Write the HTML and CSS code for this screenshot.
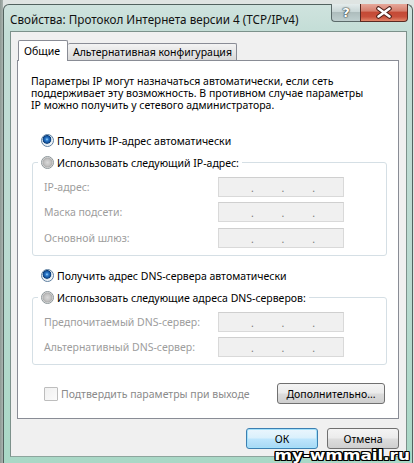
FILE: index.html
```html
<!DOCTYPE html>
<html lang="ru">
<head>
<meta charset="utf-8">
<title>Свойства: Протокол Интернета версии 4 (TCP/IPv4)</title>
<link rel="stylesheet" href="styles.css">
</head>
<body>
<div class="window">
  <div class="titlebar">
    <span class="title">Свойства: Протокол Интернета версии 4 (TCP/IPv4)</span>
    <div class="caption-buttons">
      <div class="cap cap-help"><span>?</span></div>
      <div class="cap cap-close">
        <svg width="18" height="13" viewBox="0 0 18 13">
          <path d="M3.5 2.5 L14.5 10.5 M14.5 2.5 L3.5 10.5" stroke="#4a1d16" stroke-width="4.6" stroke-linecap="round"/>
          <path d="M3.5 2.5 L14.5 10.5 M14.5 2.5 L3.5 10.5" stroke="#ffffff" stroke-width="2.6" stroke-linecap="round"/>
        </svg>
      </div>
    </div>
  </div>

  <div class="client">
    <div class="tabs">
      <div class="tab active">Общие</div>
      <div class="tab">Альтернативная конфигурация</div>
    </div>

    <div class="panel">
      <p class="intro">Параметры IP могут назначаться автоматически, если сеть
поддерживает эту возможность. В противном случае параметры
IP можно получить у сетевого администратора.</p>

      <div class="option first">
        <span class="radio on"></span><span>Получить IP-адрес автоматически</span>
      </div>

      <fieldset class="group">
        <legend class="option"><span class="radio"></span><span>Использовать следующий IP-адрес:</span></legend>
        <div class="fields">
          <span class="label">IP-адрес:</span>
          <div class="ip"><i></i><b>.</b><i></i><b>.</b><i></i><b>.</b><i></i></div>
          <span class="label">Маска подсети:</span>
          <div class="ip"><i></i><b>.</b><i></i><b>.</b><i></i><b>.</b><i></i></div>
          <span class="label">Основной шлюз:</span>
          <div class="ip"><i></i><b>.</b><i></i><b>.</b><i></i><b>.</b><i></i></div>
        </div>
      </fieldset>

      <div class="option dns">
        <span class="radio on"></span><span>Получить адрес DNS-сервера автоматически</span>
      </div>

      <fieldset class="group">
        <legend class="option"><span class="radio"></span><span>Использовать следующие адреса DNS-серверов:</span></legend>
        <div class="fields">
          <span class="label">Предпочитаемый DNS-сервер:</span>
          <div class="ip"><i></i><b>.</b><i></i><b>.</b><i></i><b>.</b><i></i></div>
          <span class="label">Альтернативный DNS-сервер:</span>
          <div class="ip"><i></i><b>.</b><i></i><b>.</b><i></i><b>.</b><i></i></div>
        </div>
      </fieldset>

      <div class="bottom-row">
        <label class="check"><span class="box"></span><span>Подтвердить параметры при выходе</span></label>
        <button class="btn advanced">Дополнительно...</button>
      </div>
    </div>

    <div class="actions">
      <button class="btn default">ОК</button>
      <button class="btn">Отмена</button>
    </div>
  </div>
</div>
<div class="watermark">my-wmmail.ru</div>
</body>
</html>
```

FILE: styles.css
```css
html, body {
  margin: 0;
  height: 100%;
}

body {
  position: relative;
  overflow: hidden;
  background: linear-gradient(90deg, #8e9994 0, #aab4b0 3px, #dfe4e2 3px);
  font-family: "Noto Sans", "Open Sans", sans-serif;
  font-size: 10.5px;
  color: #000;
}

/* Aero window frame */
.window {
  margin: 4px 1px 0 3px;
  height: 459px;
  box-sizing: border-box;
  padding: 0 5px 0 6px;
  border: 1px solid #52625f;
  border-bottom: none;
  border-radius: 6px 6px 0 0;
  background: linear-gradient(180deg, #cfe3de 0, #c3ddd6 28px, #b9dad0 60%, #a9d8c6 100%);
  display: flex;
  flex-direction: column;
}

.titlebar {
  height: 26px;
  display: flex;
  justify-content: space-between;
  align-items: center;
}

.title {
  font-size: 11.7px;
  color: #111;
  margin-top: 1px;
}

.caption-buttons {
  align-self: flex-start;
  display: flex;
  margin-top: -1px;
  margin-right: -1px;
}

.cap {
  height: 18px;
  box-sizing: border-box;
  border: 1px solid #5b6a6a;
  border-top: none;
  display: flex;
  align-items: center;
  justify-content: center;
}

.cap-help {
  width: 29px;
  border-right: none;
  border-radius: 0 0 0 4px;
  background: linear-gradient(180deg, #e4ecec 0, #c9d6d6 45%, #aebdbd 50%, #bfcfcf 100%);
}

.cap-help span {
  font-family: "DejaVu Sans", sans-serif;
  font-weight: bold;
  font-size: 13px;
  color: #fff;
  text-shadow: 0 0 1px #2f3a3a, 0 0 1px #2f3a3a, 0 0 2px #2f3a3a;
}

.cap-close {
  width: 48px;
  border-color: #5a2a22;
  border-radius: 0 0 4px 0;
  background: linear-gradient(180deg, #e6a89a 0, #d6806f 40%, #c44a36 50%, #c8503c 75%, #e2866a 100%);
}

/* dialog client area */
.client {
  flex: 1;
  border: 1px solid #7c918b;
  border-bottom-color: #8da59d;
  background: #f0f0f0;
  padding: 8px 7px 0 6px;
  margin-bottom: 6px;
}

.tabs {
  display: flex;
  align-items: flex-end;
  height: 20px;
  padding-left: 1px;
}

.tab {
  box-sizing: border-box;
  height: 17px;
  padding: 0 4px 0 5px;
  border: 1px solid #898c95;
  border-bottom: none;
  border-left: none;
  border-radius: 2px 2px 0 0;
  background: linear-gradient(180deg, #f3f3f3 0, #e6e6e6 50%, #d9d9d9 100%);
  display: flex;
  align-items: center;
  white-space: nowrap;
}

.tab.active {
  position: relative;
  z-index: 1;
  height: 21px;
  margin-bottom: -1px;
  padding: 0 7px 0 5px;
  border-left: 1px solid #898c95;
  background: #fff;
}

.panel {
  border: 1px solid #898c95;
  background: #fff;
  padding: 14px 11px 14px 13px;
}

.intro {
  margin: 0;
  line-height: 12.2px;
  white-space: pre-line;
}

.option {
  display: flex;
  align-items: center;
  gap: 3px;
  height: 14px;
  white-space: nowrap;
}

.option.first {
  margin: 22px 0 0 10px;
}

.option.dns {
  margin: 13px 0 0 10px;
}

.radio {
  width: 13px;
  height: 13px;
  box-sizing: border-box;
  border-radius: 50%;
  border: 1px solid #8c9699;
  background: radial-gradient(circle at 50% 50%, #d9d9d9 0, #c4c4c4 3px, #b1b1b1 4.5px, #e8e8e8 5.5px);
  flex: none;
}

.radio.on {
  border-color: #5e7fa0;
  background: radial-gradient(circle at 45% 40%, #a8dcff 0, #2f7fd0 1.4px, #114f98 3.4px, #0b3a73 4px, #c9d9e6 4.6px, #f1f4f6 5.5px);
}

.group {
  margin: 8px 0 0 1px;
  padding: 7px 0 7px 11px;
  border: 1px solid #d5dfe5;
  border-radius: 3px;
}

.group legend {
  margin-left: -6px;
  padding: 0 3px;
}

.fields {
  display: grid;
  grid-template-columns: 174px 126px;
  row-gap: 5.5px;
  align-items: center;
}

.label {
  color: #9d9d9d;
}

.ip {
  height: 20px;
  box-sizing: border-box;
  border: 1px solid #d9d9d9;
  border-top-color: #cfcfcf;
  background: #f0f0f0;
  padding-left: 4px;
  display: grid;
  grid-template-columns: 1fr auto 1fr auto 1fr auto 1fr;
  align-items: center;
  color: #7d7d7d;
}

.ip b {
  font-weight: normal;
  margin-top: 2px;
}

.bottom-row {
  margin: 18px 2px 0 13px;
  display: flex;
  justify-content: space-between;
  align-items: center;
}

.check {
  display: flex;
  align-items: center;
  gap: 3px;
  color: #8a8a8a;
}

.box {
  width: 14px;
  height: 14px;
  box-sizing: border-box;
  border: 1px solid #bdbdbd;
  border-radius: 1px;
  background: linear-gradient(135deg, #f0f0f0, #fbfbfb);
}

.btn {
  font: inherit;
  color: #000;
  height: 21px;
  box-sizing: border-box;
  border: 1px solid #707070;
  border-radius: 3px;
  background: linear-gradient(180deg, #f4f4f4 0, #ebebeb 49%, #dddddd 51%, #cfcfcf 100%);
  padding: 0;
  margin: 0;
}

.btn.advanced {
  width: 108px;
}

.actions {
  display: flex;
  justify-content: flex-end;
  gap: 9px;
  margin-top: 9px;
}

.actions .btn {
  width: 72px;
}

.btn.default {
  border-color: #3c7fb1;
  box-shadow: inset 0 0 0 1px #a3e1fb;
  background: linear-gradient(180deg, #eaf6fd 0, #d9f0fc 49%, #bee6fd 51%, #a7d9f5 100%);
}

/* site stamp over the lower right corner, stretched wide */
.watermark {
  position: absolute;
  right: 4px;
  bottom: 1px;
  font-family: "DejaVu Sans", sans-serif;
  font-weight: bold;
  font-size: 14px;
  line-height: 14px;
  color: #fff;
  transform: scaleX(1.2);
  transform-origin: right bottom;
  text-shadow: 1px 0 0 #000, -1px 0 0 #000, 0 1px 0 #000, 0 -1px 0 #000, 1px 1px 0 #000, -1px -1px 0 #000, 1px -1px 0 #000, -1px 1px 0 #000;
}
```
